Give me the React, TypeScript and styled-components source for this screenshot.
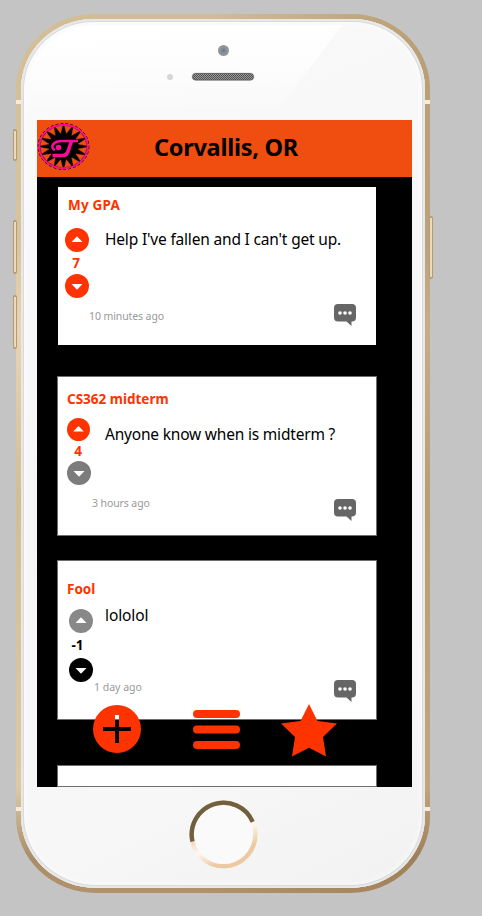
import React from 'react';
import styled, { createGlobalStyle } from 'styled-components';

const ORANGE = '#ff3300';

const GlobalStyle = createGlobalStyle`
  *, *::before, *::after { box-sizing: border-box; }
  body {
    margin: 0;
    background: #c4c4c4;
    font-family: 'Noto Sans', 'Open Sans', sans-serif;
    overflow: hidden;
  }
`;

const Page = styled.main`
  width: 482px;
  height: 916px;
  padding: 14px 0 0 16px;
  overflow: hidden;
`;

/* ---------- handset ---------- */

const Phone = styled.div`
  position: relative;
  width: 414px;
  height: 879px;
  padding: 5px;
  border-radius: 78px 78px 80px 80px / 75px 75px 76px 76px;
  background:
    linear-gradient(180deg, transparent 0 86px, #f8ecd9 86px 90px, transparent 90px 793px, #f8ecd9 793px 797px, transparent 797px),
    linear-gradient(90deg, rgba(140, 105, 65, 0) 45%, rgba(140, 105, 65, 0.38) 100%),
    linear-gradient(180deg, #d3bd94 0%, #d8c49c 25%, #ead4b5 36%, #d4bd93 55%, #dfc9a4 88%, #a98c68 96%, #b2926b 100%);
`;

const Glass = styled.div`
  position: relative;
  height: 869px;
  padding: 101px 0 0 16px;
  border-radius: 73px 73px 75px 75px / 70px 70px 72px 72px;
  background: linear-gradient(155deg, #fafafa 0%, #f6f6f6 45%, #f7f7f7 80%, #f1f1f1 100%);
  box-shadow: inset 0 0 0 2px #e7e8e8, inset 0 0 0 3px #dadada, inset 0 0 9px 2px #fff;

  &::before {
    content: '';
    position: absolute;
    inset: 6px 8px auto 5px;
    height: 95px;
    border-radius: 68px 0 0 0;
    background: linear-gradient(127deg, rgba(255, 255, 255, 0.85) 0 252px, rgba(255, 255, 255, 0) 253px);
    mask-image: linear-gradient(180deg, #000 20%, transparent 100%);
  }
`;

const SideButton = styled.span<{ $top: number; $height: number; $right?: boolean }>`
  position: absolute;
  top: ${(p) => p.$top}px;
  ${(p) => (p.$right ? 'right: -3px;' : 'left: -3px;')}
  width: 4px;
  height: ${(p) => p.$height}px;
  border: solid #b39b75;
  border-width: 2px 1px;
  border-radius: 2px;
  background: #ecdabb;
`;

const Earpiece = styled.svg`
  position: absolute;
  top: 26px;
  left: 146px;
`;

const HomeButton = styled.svg`
  display: block;
  margin: 13px 0 0 151px;
`;

/* ---------- app ---------- */

const Screen = styled.section`
  position: relative;
  width: 375px;
  height: 667px;
  overflow: hidden;
  background: #000;
`;

const Header = styled.header`
  display: flex;
  align-items: center;
  height: 57px;
  padding-bottom: 3px;
  background: #f04e10;
`;

const HeaderTitle = styled.h1`
  margin: 0 0 0 63px;
  font-size: 23.5px;
  line-height: 32px;
  font-weight: 700;
  letter-spacing: -0.27px;
  white-space: nowrap;
`;

const Feed = styled.div`
  display: flex;
  flex-direction: column;
`;

interface CardShape {
  $gap: number;
  $framed: boolean;
}

const Card = styled.article<CardShape>`
  flex: none;
  width: ${(p) => (p.$framed ? 320 : 318)}px;
  height: ${(p) => (p.$framed ? 160 : 158)}px;
  margin: ${(p) => p.$gap}px 0 0 ${(p) => (p.$framed ? 20 : 21)}px;
  border: ${(p) => (p.$framed ? '1px solid #6e6e6e' : '0')};
  background: #fff;
  overflow: hidden;
`;

const Topic = styled.h2<{ $top: number; $left: number; $track: number }>`
  margin: ${(p) => p.$top}px 0 0 ${(p) => p.$left}px;
  font-size: 13.5px;
  line-height: 18px;
  font-weight: 700;
  letter-spacing: ${(p) => p.$track}px;
  color: ${ORANGE};
  white-space: nowrap;
`;

const Body = styled.div<{ $height: number }>`
  display: flex;
  height: ${(p) => p.$height}px;
`;

const Votes = styled.div<{ $top: number; $left: number }>`
  flex: none;
  display: flex;
  flex-direction: column;
  width: 24px;
  margin: ${(p) => p.$top}px 0 0 ${(p) => p.$left}px;
`;

const VoteIcon = styled.svg`
  display: block;
  flex: none;
`;

const Score = styled.span<{ $height: number; $color: string; $shift: number }>`
  height: ${(p) => p.$height}px;
  padding-right: ${(p) => p.$shift}px;
  line-height: ${(p) => p.$height}px;
  font-size: 13.5px;
  font-weight: 700;
  text-align: center;
  white-space: nowrap;
  color: ${(p) => p.$color};
`;

const Message = styled.p<{ $top: number; $left: number; $track: number }>`
  margin: ${(p) => p.$top}px 0 0 ${(p) => p.$left}px;
  font-size: 15.5px;
  line-height: 22px;
  letter-spacing: ${(p) => p.$track}px;
  white-space: nowrap;
  color: #000;
`;

const Footer = styled.footer<{ $left: number; $right: number }>`
  display: flex;
  justify-content: space-between;
  align-items: flex-start;
  padding: 0 ${(p) => p.$right}px 0 ${(p) => p.$left}px;
`;

const Time = styled.time<{ $top: number; $track: number }>`
  margin-top: ${(p) => p.$top}px;
  font-size: 10.5px;
  line-height: 14px;
  letter-spacing: ${(p) => p.$track}px;
  color: #999;
  white-space: nowrap;
`;

const NextCard = styled.article`
  flex: none;
  width: 320px;
  height: 22px;
  margin: 45px 0 0 20px;
  border: 1px solid #6e6e6e;
  background: #fff;
`;

const ActionBar = styled.nav`
  position: absolute;
  left: 56px;
  bottom: 30px;
  display: flex;
  align-items: flex-start;
`;

const Action = styled.button<{ $gap?: number; $drop?: number }>`
  display: block;
  margin: ${(p) => p.$drop ?? 0}px 0 0 ${(p) => p.$gap ?? 0}px;
  padding: 0;
  border: 0;
  background: none;
  svg { display: block; }
`;

/* ---------- drawings ---------- */

function Vote({ down, color, size = 24 }: { down?: boolean; color: string; size?: number }) {
  return (
    <VoteIcon width={size} height={size} viewBox="0 0 24 24">
      <circle cx="12" cy="12" r="12" fill={color} />
      <path d={down ? 'M6.5 10h11L12 15.700z' : 'M6.5 14h11L12 8.300z'} fill="#fff" />
    </VoteIcon>
  );
}

function ChatIcon() {
  return (
    <svg width="23" height="23" viewBox="0 0 23 23">
      <path d="M4 0h14a4 4 0 0 1 4 4v9.500a4 4 0 0 1-4 4h-.5v4.500l-5-4.500H4a4 4 0 0 1-4-4V4a4 4 0 0 1 4-4z" fill="#666" />
      <circle cx="6" cy="9" r="1.800" fill="#fff" />
      <circle cx="11" cy="9" r="1.800" fill="#fff" />
      <circle cx="16" cy="9" r="1.800" fill="#fff" />
    </svg>
  );
}

const point = (angle: number, radius: number) =>
  `${(26.5 + Math.cos(angle) * radius).toFixed(1)} ${(23.5 + Math.sin(angle) * radius * 0.9).toFixed(1)}`;

/* notches cut between the sixteen rays of the sun */
const notches = Array.from({ length: 16 }, (_, i) => {
  const a = ((i + 0.5) * Math.PI) / 8;
  return `M${point(a - 0.15, 23)}L${point(a + 0.15, 23)}L${point(a, 15)}z`;
}).join('');

function Logo() {
  return (
    <svg width="54" height="48" viewBox="0 0 54 48">
      <ellipse cx="26.500" cy="23.500" rx="25.400" ry="22.900" fill="none" stroke="#000" strokeWidth="0.9" strokeDasharray="3 2" />
      <ellipse cx="26.500" cy="23.500" rx="24" ry="21.600" fill="#000" />
      <path d={notches} fill="#f04e10" stroke="#f04e10" strokeWidth="0.5" />
      <ellipse cx="26.500" cy="23.500" rx="24.200" ry="21.800" fill="none" stroke="#ff0a96" strokeWidth="1.900" />
      <g fill="none" stroke="#ff0a96">
        <path d="M41 18H26.500C14.500 17.500 13 25.500 18 27" strokeWidth="2.600" />
        <circle cx="21.500" cy="24.500" r="2.800" fill="#ff0a96" stroke="none" />
        <path d="M34.500 18L31 28.500Q29.500 32.500 26 32.500H15.500" strokeWidth="3.600" />
      </g>
    </svg>
  );
}

/* ---------- content ---------- */

interface Post {
  topic: string;
  text: string;
  time: string;
  score: string;
  scoreColor: string;
  up: string;
  down: string;
  upSize: number;
  framed: boolean;
  gap: number;
  topicAt: [number, number, number];
  bodyHeight: number;
  votesAt: [number, number];
  scoreHeight: number;
  scoreShift: number;
  textAt: [number, number, number];
  timeAt: [number, number, number];
}

const posts: Post[] = [
  {
    topic: 'My GPA', text: "Help I've fallen and I can't get up.", time: '10 minutes ago',
    score: '7', scoreColor: ORANGE, up: ORANGE, down: ORANGE, upSize: 24,
    framed: false, gap: 10, topicAt: [9, 10, 0.2], bodyHeight: 90, votesAt: [14, 7],
    scoreHeight: 22, scoreShift: 2, textAt: [14, 16, -0.18], timeAt: [5, 31, -0.1],
  },
  {
    topic: 'CS362 midterm', text: 'Anyone know when is midterm ?', time: '3 hours ago',
    score: '4', scoreColor: ORANGE, up: ORANGE, down: '#7c7c7c', upSize: 23,
    framed: true, gap: 31, topicAt: [13, 9, 0], bodyHeight: 91, votesAt: [10, 9],
    scoreHeight: 20, scoreShift: 2, textAt: [15, 14, -0.2], timeAt: [-3, 34, -0.1],
  },
  {
    topic: 'Fool', text: 'lololol', time: '1 day ago',
    score: '-1', scoreColor: '#000', up: '#888', down: '#000', upSize: 24,
    framed: true, gap: 24, topicAt: [19, 9, 0], bodyHeight: 82, votesAt: [11, 11],
    scoreHeight: 25, scoreShift: 7, textAt: [6, 12, -0.1], timeAt: [0, 36, 0],
  },
];

function PostCard({ post }: { post: Post }) {
  return (
    <Card $gap={post.gap} $framed={post.framed}>
      <Topic $top={post.topicAt[0]} $left={post.topicAt[1]} $track={post.topicAt[2]}>{post.topic}</Topic>
      <Body $height={post.bodyHeight}>
        <Votes $top={post.votesAt[0]} $left={post.votesAt[1]}>
          <Vote color={post.up} size={post.upSize} />
          <Score $height={post.scoreHeight} $color={post.scoreColor} $shift={post.scoreShift}>{post.score}</Score>
          <Vote color={post.down} down />
        </Votes>
        <Message $top={post.textAt[0]} $left={post.textAt[1]} $track={post.textAt[2]}>{post.text}</Message>
      </Body>
      <Footer $left={post.timeAt[1]} $right={19}>
        <Time $top={post.timeAt[0]} $track={post.timeAt[2]}>{post.time}</Time>
        <ChatIcon />
      </Footer>
    </Card>
  );
}

export default function App() {
  return (
    <>
      <GlobalStyle />
      <Page>
        <Phone>
          <SideButton $top={115} $height={32} />
          <SideButton $top={206} $height={54} />
          <SideButton $top={281} $height={54} />
          <SideButton $top={202} $height={63} $right />
          <Glass>
            <Earpiece width="96" height="46" viewBox="0 0 96 46">
              <defs>
                <pattern id="mesh" width="2" height="2" patternUnits="userSpaceOnUse">
                  <path d="M0 0h2v2H0z" fill="#9b9b9b" />
                  <path d="M0 0h1v1H0zM1 1h1v1H1z" fill="#505050" />
                </pattern>
              </defs>
              <circle cx="56.500" cy="5.500" r="5.500" fill="#929496" />
              <circle cx="56.500" cy="5.500" r="3" fill="#85898f" />
              <circle cx="56.500" cy="5.500" r="1.500" fill="#6480ad" />
              <circle cx="3" cy="32" r="3" fill="#d6d6d6" />
              <rect x="24.500" y="27.500" width="63" height="8.500" rx="4.250" fill="#dcdcdc" />
              <rect x="25.500" y="28.500" width="61" height="6.500" rx="3.250" fill="url(#mesh)" stroke="#555" strokeWidth="0.8" />
            </Earpiece>
            <Screen>
              <Header>
                <Logo />
                <HeaderTitle>Corvallis, OR</HeaderTitle>
              </Header>
              <Feed>
                {posts.map((post) => <PostCard key={post.topic} post={post} />)}
                <NextCard />
              </Feed>
              <ActionBar>
                <Action $drop={1} aria-label="New post">
                  <svg width="48" height="48" viewBox="0 0 48 48">
                    <path fillRule="evenodd" fill={ORANGE} d="M24 0a24 24 0 1 1 0 48a24 24 0 1 1 0-48zM22 10v12H10v4h12v12h4V26h12v-4H26V10z" />
                  </svg>
                </Action>
                <Action $gap={52} $drop={6} aria-label="Menu">
                  <svg width="47" height="39" viewBox="0 0 47 39">
                    <rect width="47" height="8" rx="4" fill={ORANGE} />
                    <rect y="15.500" width="47" height="8" rx="4" fill={ORANGE} />
                    <rect y="31" width="47" height="8" rx="4" fill={ORANGE} />
                  </svg>
                </Action>
                <Action $gap={41} aria-label="Favorites">
                  <svg width="56" height="53" viewBox="0 0 56 53">
                    <path d="M28 0l8.500 17L56 19.500 42 33 45 52.500 28 43.700 11 52.500 14 33 0 19.500l19.500-2.500z" fill={ORANGE} />
                  </svg>
                </Action>
              </ActionBar>
            </Screen>
            <HomeButton width="72" height="72" viewBox="0 0 72 72">
              <defs>
                <linearGradient id="ring" x1="0" y1="0.350" x2="0.350" y2="1">
                  <stop offset="0" stopColor="#dfb588" />
                  <stop offset="0.600" stopColor="#fff8f0" />
                  <stop offset="1" stopColor="#ecc9a0" />
                </linearGradient>
              </defs>
              <circle cx="35.500" cy="34.500" r="31.800" fill="#fafafa" stroke="url(#ring)" strokeWidth="4.400" />
              <path d="M4.470 41.460A31.800 31.800 0 0 1 64.700 21.900" fill="none" stroke="#70603f" strokeWidth="4.400" />
            </HomeButton>
          </Glass>
        </Phone>
      </Page>
    </>
  );
}
